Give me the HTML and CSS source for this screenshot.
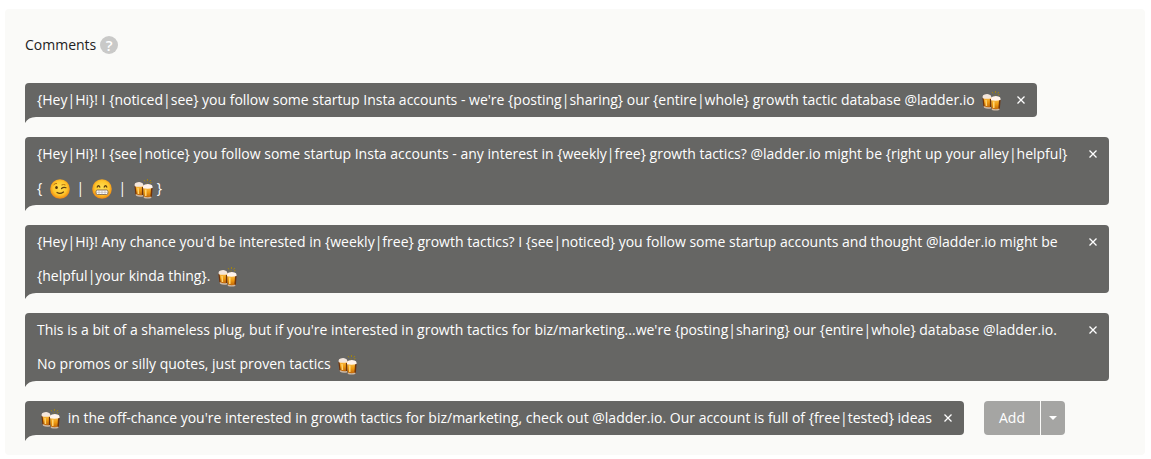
FILE: index.html
```html
<!DOCTYPE html>
<html lang="en">
<head>
<meta charset="utf-8">
<title>Comments</title>
<link rel="stylesheet" href="styles.css">
</head>
<body>
<svg class="defs" aria-hidden="true">
  <defs>
    <linearGradient id="ale" x1="0" x2="0" y1="0" y2="1">
      <stop offset="0" stop-color="#fbc04a"/><stop offset=".5" stop-color="#ee980f"/><stop offset="1" stop-color="#b9600a"/>
    </linearGradient>
    <radialGradient id="face" cx=".5" cy=".45" r=".55">
      <stop offset="0" stop-color="#ffdf55"/><stop offset=".65" stop-color="#ffc62b"/><stop offset="1" stop-color="#ee8410"/>
    </radialGradient>
    <symbol id="beer" viewBox="0 0 20 20">
      <path d="M10 1l1 1.500M13.500 0v2M13 3.500v1M17 1l-1.500 1.500M16 4l1.500-.500" stroke="#a08410" stroke-width="1" fill="none"/>
      <path d="M1 6h8.500v10q-4 2-7.500-.5z" fill="url(#ale)"/>
      <path d="M1 7l1 8.500M8.500 8v8" stroke="#70330a" stroke-width="1.200"/>
      <path d="M4 9l.5 6" stroke="#ffd774" stroke-width="1.400"/>
      <path d="M1.700 15q3.500 2 7.300 1v1.500q-4 1-7-.7z" fill="#cdb9a5"/>
      <path d="M.6 5.500q0-1.500 2-2 3-1 5 .3 1.700.5 1.700 2v1.400q-4.500 1-8.500 0z" fill="#f3e6dc"/>
      <path d="M9.500 8H18l-.7 10.500q-3.500 1.200-7.500 0z" fill="url(#ale)"/>
      <path d="M17.800 9l-.7 9" stroke="#70330a" stroke-width="1.500"/>
      <path d="M11.800 10.500v6.500" stroke="#ffd774" stroke-width="1.500"/>
      <path d="M9.800 17.500q4 1.300 7.500 0V19q-3.500 1.200-7.500 0z" fill="#cdb9a5"/>
      <path d="M9 7.500q0-1.500 2-2 3-1 5.500 0 2 .5 2 2V9q-4.500 1.200-9.500.200z" fill="#fff4ec"/>
    </symbol>
    <symbol id="wink" viewBox="0 0 20 20">
      <circle cx="10" cy="10" r="9.800" fill="url(#face)"/>
      <path d="M3.500 6q1.500-2 3.500-1.500M11.500 6q2-1 4 0" stroke="#b4700f" stroke-width="1" fill="none"/>
      <ellipse cx="6.500" cy="8.500" rx="1.300" ry="1.500" fill="#51320b"/>
      <path d="M11.500 9.500q2-1.800 4.500-.800M7 13.500q3 2 6.500-.5" stroke="#61400e" stroke-width="1.200" stroke-linecap="round" fill="none"/>
    </symbol>
    <symbol id="grin" viewBox="0 0 20 20">
      <circle cx="10" cy="10" r="9.800" fill="url(#face)"/>
      <path d="M5 8.500q1.500-3.500 3 0M12 8.500q1.500-3.500 3 0" stroke="#61400e" stroke-width="1.300" fill="none"/>
      <rect x="4" y="11" width="12" height="4.500" rx="1.500" fill="#fff" stroke="#8c7257"/>
      <path d="M4.500 13.300h11M7 11.500v4M10 11.500v4M13 11.500v4" stroke="#b4aaa0" stroke-width=".6"/>
    </symbol>
    <symbol id="cross" viewBox="0 0 8 8">
      <path d="M.5.5l7 7M7.500.5l-7 7" stroke="#fff" stroke-width="1.300" fill="none"/>
    </symbol>
    <symbol id="tail" viewBox="0 0 12 6">
      <path d="M0 0h11Q3 0 0 6z" fill="#666664"/>
    </symbol>
  </defs>
</svg>

<section class="panel">
  <header class="panel-head">
    <h2 class="title">Comments</h2>
    <button class="help" type="button" aria-label="Help">?</button>
  </header>
  <ul class="comments">
    <li class="comment">
      <p class="text">{Hey|Hi}! I {noticed|see} you follow some startup Insta accounts - we're {posting|sharing} our {entire|whole} growth tactic database @ladder.io <svg class="emoji"><use href="#beer"/></svg></p>
      <button class="remove" type="button" aria-label="Remove"><svg class="cross"><use href="#cross"/></svg></button>
      <svg class="tail"><use href="#tail"/></svg>
    </li>
    <li class="comment">
      <p class="text">{Hey|Hi}! I {see|notice} you follow some startup Insta accounts - any interest in {weekly|free} growth tactics? @ladder.io might be {right up your alley|helpful} <span class="choices">{ <svg class="emoji"><use href="#wink"/></svg> | <svg class="emoji"><use href="#grin"/></svg> | <svg class="emoji"><use href="#beer"/></svg>}</span></p>
      <button class="remove" type="button" aria-label="Remove"><svg class="cross"><use href="#cross"/></svg></button>
      <svg class="tail"><use href="#tail"/></svg>
    </li>
    <li class="comment">
      <p class="text">{Hey|Hi}! Any chance you'd be interested in {weekly|free} growth tactics? I {see|noticed} you follow some startup accounts and thought @ladder.io might be {helpful|your kinda thing}. <svg class="emoji"><use href="#beer"/></svg></p>
      <button class="remove" type="button" aria-label="Remove"><svg class="cross"><use href="#cross"/></svg></button>
      <svg class="tail"><use href="#tail"/></svg>
    </li>
    <li class="comment">
      <p class="text">This is a bit of a shameless plug, but if you're interested in growth tactics for biz/marketing...we're {posting|sharing} our {entire|whole} database @ladder.io. No promos or silly quotes, just proven tactics <svg class="emoji"><use href="#beer"/></svg></p>
      <button class="remove" type="button" aria-label="Remove"><svg class="cross"><use href="#cross"/></svg></button>
      <svg class="tail"><use href="#tail"/></svg>
    </li>
    <li class="comment">
      <p class="text"><svg class="emoji"><use href="#beer"/></svg> in the off-chance you're interested in growth tactics for biz/marketing, check out @ladder.io. Our account is full of {free|tested} ideas</p>
      <button class="remove" type="button" aria-label="Remove"><svg class="cross"><use href="#cross"/></svg></button>
      <svg class="tail"><use href="#tail"/></svg>
    </li>
    <li class="actions">
      <button class="add" type="button">Add</button>
      <button class="more" type="button" aria-label="More options"><svg class="caret" viewBox="0 0 8 4"><path d="M0 0h8L4 4z" fill="#fff"/></svg></button>
    </li>
  </ul>
</section>
</body>
</html>
```

FILE: styles.css
```css
* {
  box-sizing: border-box;
}

body {
  margin: 9px 6px 4px 5px;
  background: #fff;
  color: #222;
  font: 14px/34px "Open Sans", "Noto Sans", sans-serif;
}

button {
  border: 0;
  padding: 0;
  font: inherit;
  color: #fff;
  cursor: pointer;
}

.defs {
  position: absolute;
  width: 0;
  height: 0;
}

.panel {
  padding: 19px 36px 20px 20px;
  border-radius: 4px;
  background: #fafaf8;
}

.panel-head {
  display: flex;
  align-items: center;
  gap: 4px;
  margin-bottom: 21px;
}

.title {
  margin: 0;
  font-size: 14px;
  font-weight: 400;
}

.help {
  width: 18px;
  height: 18px;
  border-radius: 50%;
  background: #c9c9c8;
  font-size: 15px;
  font-weight: 600;
  line-height: 18px;
}

.comments {
  display: flex;
  flex-wrap: wrap;
  gap: 20px;
  margin: 0;
  padding: 0;
  list-style: none;
}

.comment {
  position: relative;
  display: flex;
  align-items: flex-start;
  padding-left: 12px;
  border-radius: 4px 4px 4px 0;
  background: #666664;
  color: #fff;
}

.text {
  margin: 0;
}

.choices {
  display: inline-block;
  vertical-align: top;
}

.emoji {
  width: 20px;
  height: 20px;
  margin: 0 3px 0 4px;
  vertical-align: middle;
}

.remove {
  display: flex;
  flex: none;
  align-items: center;
  justify-content: center;
  width: 32px;
  height: 34px;
  background: none;
}

.cross {
  width: 8px;
  height: 8px;
}

.tail {
  position: absolute;
  top: 100%;
  left: 0;
  width: 12px;
  height: 6px;
}

.actions {
  display: flex;
  gap: 1px;
}

.add,
.more {
  display: flex;
  align-items: center;
  justify-content: center;
  height: 34px;
  background: #a5a5a3;
}

.add {
  padding: 0 15px;
  border-radius: 4px 0 0 4px;
}

.more {
  width: 24px;
  border-radius: 0 4px 4px 0;
}

.caret {
  width: 8px;
  height: 4px;
}
```
